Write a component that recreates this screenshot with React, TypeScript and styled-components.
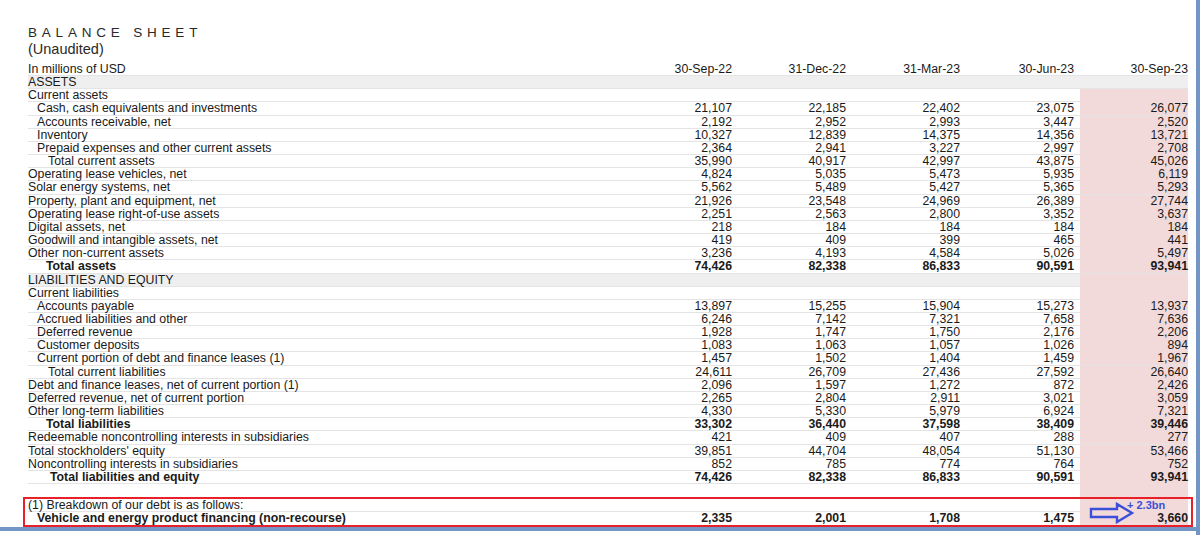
import styled, { createGlobalStyle } from "styled-components";

const GlobalStyle = createGlobalStyle`
	html, body { margin: 0; padding: 0; background: #ffffff; }
	body { font-family: "Liberation Sans", Arial, sans-serif; color: #1a1a1a; }
`;

const Page = styled.div`
	width: 1200px;
	height: 535px;
	display: flex;
	overflow: hidden;
`;

const Sheet = styled.div`
	width: 1196px;
	height: 531px;
	box-sizing: border-box;
	padding: 25px 0 0 28px;
	border-bottom: 4px solid #7395c6;
	background: #ffffff;
	position: relative;
`;

const Side = styled.div`
	width: 4px;
	background: #7395c6;
`;

const Title = styled.h1`
	margin: 0;
	font-size: 13.5px;
	font-weight: normal;
	letter-spacing: 4.8px;
	color: #2a2a2a;
	line-height: 16px;
`;

const Sub = styled.div`
	font-size: 14.5px;
	line-height: 16px;
	margin-bottom: 6px;
	color: #2a2a2a;
`;

const Row = styled.div<{ $shade?: boolean; $bold?: boolean; $line?: boolean }>`
	display: grid;
	grid-template-columns: 590px 114px 114px 114px 114px 6px 108px;
	height: 13.17px;
	line-height: 13px;
	font-size: 12.3px;
	font-weight: ${(p) => (p.$bold ? "bold" : "normal")};
	background: ${(p) => (p.$shade ? "#efefef" : "transparent")};
	border-bottom: ${(p) => (p.$line === false ? "none" : "1px solid #e4e4e4")};
	box-sizing: border-box;
	width: 1160px;
`;

const Label = styled.div<{ $indent: number }>`
	padding-left: ${(p) => p.$indent}px;
	white-space: nowrap;
`;

const Num = styled.div`
	text-align: right;
	white-space: nowrap;
`;

const Pink = styled.div<{ $on: boolean }>`
	text-align: right;
	white-space: nowrap;
	background: ${(p) => (p.$on ? "#f3dada" : "transparent")};
`;

const Gap = styled.div``;

const Spacer = styled.div`
	display: grid;
	grid-template-columns: 590px 114px 114px 114px 114px 6px 108px;
	height: 13px;
	width: 1160px;
`;

const Box = styled.div`
	margin-left: -5px;
	width: 1170px;
	padding-left: 3px;
	border: 2px solid #e8202a;
	box-sizing: border-box;
	position: relative;
`;

const Callout = styled.div`
	position: absolute;
	left: 1064px;
	top: 3px;
	display: flex;
	align-items: flex-start;
`;

const CalloutText = styled.span`
	color: #3b4fd8;
	font-size: 11px;
	font-weight: bold;
	margin-left: -8px;
	margin-top: -3px;
`;

type Line = [string, number, string[], { bold?: boolean; shade?: boolean }?];

const rows: Line[] = [
	["ASSETS", 0, [], { shade: true }],
	["Current assets", 0, []],
	["Cash, cash equivalents and investments", 9, ["21,107", "22,185", "22,402", "23,075", "26,077"]],
	["Accounts receivable, net", 9, ["2,192", "2,952", "2,993", "3,447", "2,520"]],
	["Inventory", 9, ["10,327", "12,839", "14,375", "14,356", "13,721"]],
	["Prepaid expenses and other current assets", 9, ["2,364", "2,941", "3,227", "2,997", "2,708"]],
	["Total current assets", 20, ["35,990", "40,917", "42,997", "43,875", "45,026"]],
	["Operating lease vehicles, net", 0, ["4,824", "5,035", "5,473", "5,935", "6,119"]],
	["Solar energy systems, net", 0, ["5,562", "5,489", "5,427", "5,365", "5,293"]],
	["Property, plant and equipment, net", 0, ["21,926", "23,548", "24,969", "26,389", "27,744"]],
	["Operating lease right-of-use assets", 0, ["2,251", "2,563", "2,800", "3,352", "3,637"]],
	["Digital assets, net", 0, ["218", "184", "184", "184", "184"]],
	["Goodwill and intangible assets, net", 0, ["419", "409", "399", "465", "441"]],
	["Other non-current assets", 0, ["3,236", "4,193", "4,584", "5,026", "5,497"]],
	["Total assets", 18, ["74,426", "82,338", "86,833", "90,591", "93,941"], { bold: true }],
	["LIABILITIES AND EQUITY", 0, [], { shade: true }],
	["Current liabilities", 0, []],
	["Accounts payable", 9, ["13,897", "15,255", "15,904", "15,273", "13,937"]],
	["Accrued liabilities and other", 9, ["6,246", "7,142", "7,321", "7,658", "7,636"]],
	["Deferred revenue", 9, ["1,928", "1,747", "1,750", "2,176", "2,206"]],
	["Customer deposits", 9, ["1,083", "1,063", "1,057", "1,026", "894"]],
	["Current portion of debt and finance leases (1)", 9, ["1,457", "1,502", "1,404", "1,459", "1,967"]],
	["Total current liabilities", 20, ["24,611", "26,709", "27,436", "27,592", "26,640"]],
	["Debt and finance leases, net of current portion (1)", 0, ["2,096", "1,597", "1,272", "872", "2,426"]],
	["Deferred revenue, net of current portion", 0, ["2,265", "2,804", "2,911", "3,021", "3,059"]],
	["Other long-term liabilities", 0, ["4,330", "5,330", "5,979", "6,924", "7,321"]],
	["Total liabilities", 18, ["33,302", "36,440", "37,598", "38,409", "39,446"], { bold: true }],
	["Redeemable noncontrolling interests in subsidiaries", 0, ["421", "409", "407", "288", "277"]],
	["Total stockholders' equity", 0, ["39,851", "44,704", "48,054", "51,130", "53,466"]],
	["Noncontrolling interests in subsidiaries", 0, ["852", "785", "774", "764", "752"]],
	["Total liabilities and equity", 22, ["74,426", "82,338", "86,833", "90,591", "93,941"], { bold: true }],
];

function DataRow({ line, pink }: { line: Line; pink: boolean }) {
	const [label, indent, vals, opts] = line;
	return (
		<Row $shade={opts?.shade} $bold={opts?.bold}>
			<Label $indent={indent}>{label}</Label>
			<Num>{vals[0]}</Num>
			<Num>{vals[1]}</Num>
			<Num>{vals[2]}</Num>
			<Num>{vals[3]}</Num>
			<Gap />
			<Pink $on={pink}>{vals[4]}</Pink>
		</Row>
	);
}

function Arrow() {
	return (
		<svg width="46" height="22" viewBox="0 0 46 22">
			<path d="M2 7 H28 V2 L43 11 L28 20 V15 H2 Z" fill="none" stroke="#3b4fd8" strokeWidth="2.4" strokeLinejoin="miter" />
		</svg>
	);
}

export default function App() {
	return (
		<Page>
			<GlobalStyle />
			<Sheet>
				<Title>BALANCE SHEET</Title>
				<Sub>(Unaudited)</Sub>
				<DataRow line={["In millions of USD", 0, ["30-Sep-22", "31-Dec-22", "31-Mar-23", "30-Jun-23", "30-Sep-23"]]} pink={false} />
				{rows.map((r, i) => (
					<DataRow key={i} line={r} pink={i > 0} />
				))}
				<Spacer>
					<div />
					<div />
					<div />
					<div />
					<div />
					<div />
					<Pink $on />
				</Spacer>
				<Box>
					<Row>
						<Label $indent={0}>(1) Breakdown of our debt is as follows:</Label>
						<Num />
						<Num />
						<Num />
						<Num />
						<Gap />
						<Pink $on />
					</Row>
					<Row $bold $line={false}>
						<Label $indent={9}>Vehicle and energy product financing (non-recourse)</Label>
						<Num>2,335</Num>
						<Num>2,001</Num>
						<Num>1,708</Num>
						<Num>1,475</Num>
						<Gap />
						<Pink $on>3,660</Pink>
					</Row>
					<Callout>
						<Arrow />
						<CalloutText>+ 2.3bn</CalloutText>
					</Callout>
				</Box>
			</Sheet>
			<Side />
		</Page>
	);
}
